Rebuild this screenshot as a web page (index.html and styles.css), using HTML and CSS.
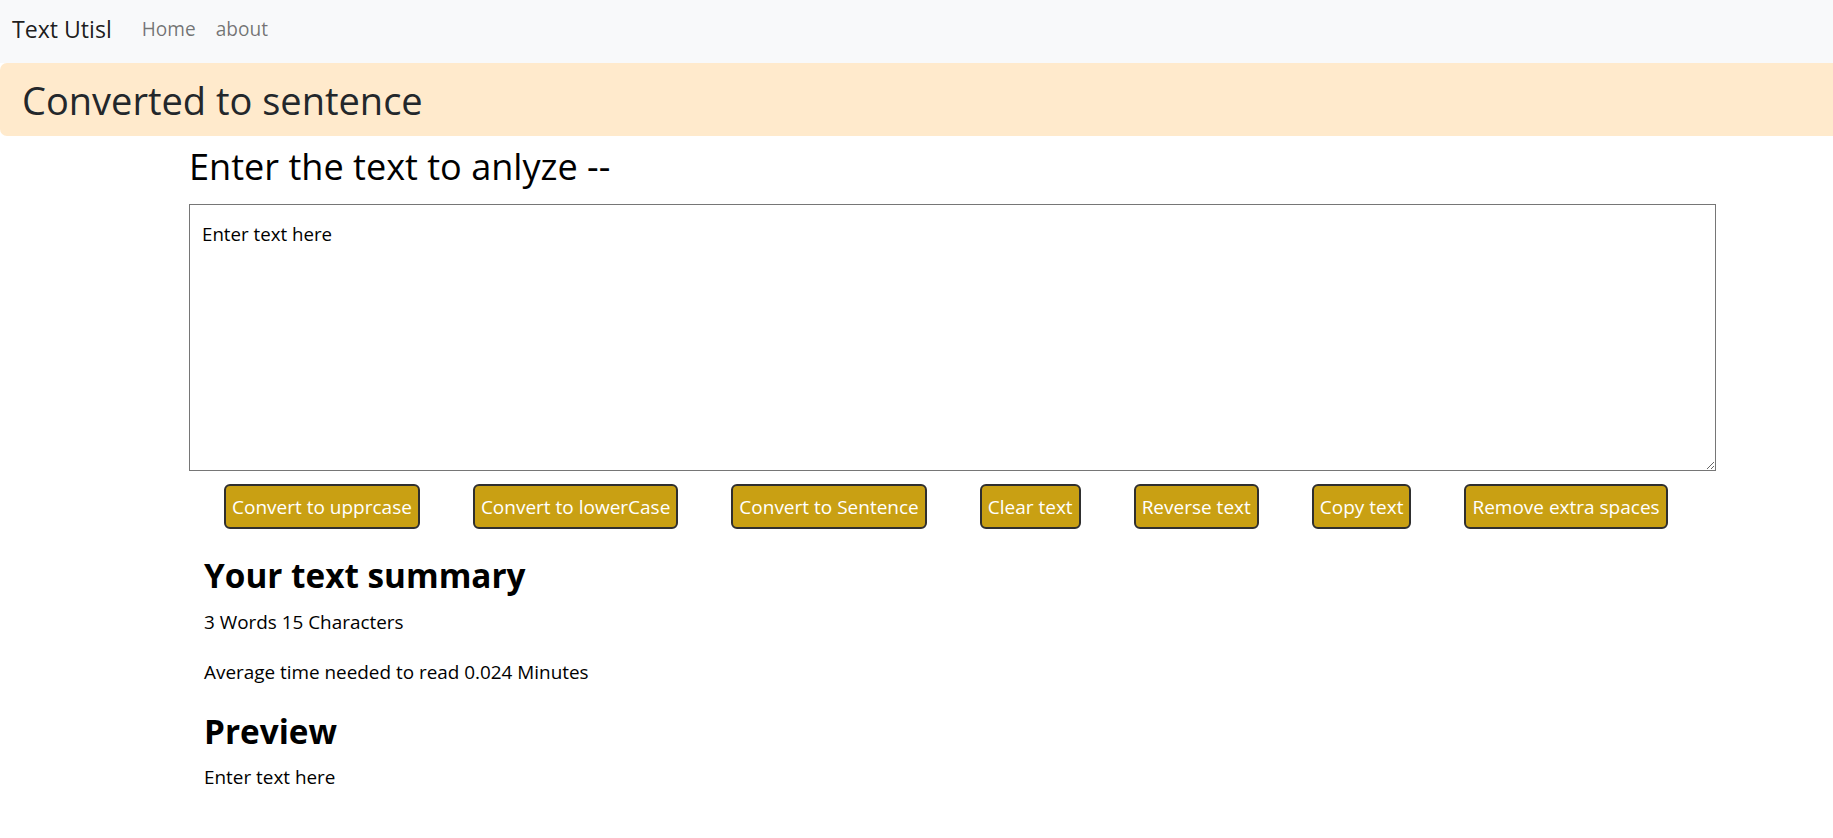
FILE: index.html
```html
<!DOCTYPE html>
<html lang="en">
<head>
<meta charset="utf-8">
<title>Text Utisl</title>
<link rel="stylesheet" href="styles.css">
</head>
<body>
<nav class="navbar">
  <a class="brand" href="#">Text Utisl</a>
  <ul class="nav-links">
    <li><a class="nav-link" href="#">Home</a></li>
    <li><a class="nav-link" href="#">about</a></li>
  </ul>
</nav>
<div class="alert">Converted to sentence</div>
<main class="main">
  <h2 class="form-title">Enter the text to anlyze --</h2>
  <textarea class="text-input" rows="8">Enter text here</textarea>
  <div class="actions">
    <button class="btn">Convert to upprcase</button>
    <button class="btn">Convert to lowerCase</button>
    <button class="btn">Convert to Sentence</button>
    <button class="btn">Clear text</button>
    <button class="btn">Reverse text</button>
    <button class="btn">Copy text</button>
    <button class="btn">Remove extra spaces</button>
  </div>
  <section class="summary">
    <h2 class="section-title">Your text summary</h2>
    <p class="counts">3 Words 15 Characters</p>
    <p class="read-time">Average time needed to read 0.024 Minutes</p>
    <h2 class="section-title preview-title">Preview</h2>
    <p class="preview">Enter text here</p>
  </section>
</main>
</body>
</html>
```
FILE: styles.css
```css
* {
  box-sizing: border-box;
}

html, body {
  margin: 0;
  padding: 0;
  overflow-x: hidden;
}

body {
  font-family: "Open Sans", "Noto Sans", sans-serif;
  font-size: 18.9px;
  line-height: 28.8px;
  color: #000;
  background: #fff;
}

.navbar {
  height: 63px;
  background: #f8f9fa;
  display: flex;
  align-items: flex-start;
  padding-left: 12px;
}

.brand {
  font-size: 23.1px;
  line-height: 30px;
  padding-top: 14px;
  color: rgba(0, 0, 0, 0.9);
  text-decoration: none;
}

.nav-links {
  list-style: none;
  margin: 0 0 0 30px;
  padding: 0;
  display: flex;
  gap: 20px;
}

.nav-link {
  display: block;
  font-size: 19.1px;
  line-height: 28.8px;
  padding-top: 15px;
  color: rgba(0, 0, 0, 0.55);
  text-decoration: none;
}

.alert {
  height: 73px;
  display: flex;
  align-items: center;
  padding-left: 22px;
  background: #ffeacc;
  border-radius: 7px 0 0 7px;
  color: #23272b;
  font-size: 38px;
  line-height: 38px;
}

.main {
  margin-left: 189px;
  width: 1527px;
}

.form-title {
  margin: 9px 0 16px;
  font-size: 36.1px;
  line-height: 43px;
  font-weight: 400;
}

.text-input {
  display: block;
  width: 1527px;
  height: 267px;
  margin: 0;
  padding: 15px 12px;
  border: 1px solid #767676;
  border-radius: 0;
  font-family: inherit;
  font-size: 18.7px;
  line-height: 28.8px;
  color: #000;
  background: #fff;
  resize: both;
}

.actions {
  display: flex;
  gap: 53px;
  margin-top: 13px;
  padding-left: 35px;
}

.btn {
  height: 45px;
  padding: 0 6px;
  border: 2px solid #2f2f2f;
  border-radius: 6px;
  background: #c9a013;
  color: #fff;
  font-family: inherit;
  font-size: 19px;
  line-height: 28px;
  white-space: nowrap;
}

.summary {
  padding-left: 15px;
  padding-top: 26px;
}

.section-title {
  margin: 0;
  font-size: 33.3px;
  line-height: 40px;
  font-weight: 700;
}

.counts {
  margin: 12.5px 0 0;
}

.read-time {
  margin: 21.5px 0 0;
}

.preview-title {
  margin-top: 24.5px;
}

.preview {
  margin: 12px 0 0;
}
```
